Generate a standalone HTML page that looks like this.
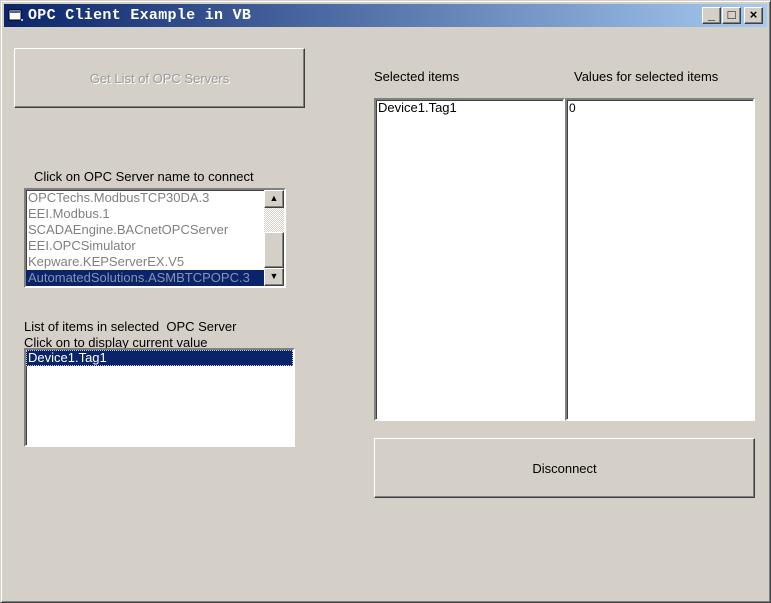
<!DOCTYPE html>
<html><head><style>
*{margin:0;padding:0;box-sizing:border-box}
body{width:771px;height:603px;background:#d4d0c8;position:relative;overflow:hidden;font-family:"Liberation Sans",Arial,sans-serif;font-size:12px;color:#000}
.win{position:absolute;left:0;top:0;width:771px;height:603px;border:1px solid;border-color:#d4d0c8 #404040 #404040 #d4d0c8;box-shadow:inset 1px 1px #fff,inset -1px -1px #808080}
.title{position:absolute;left:4px;top:4px;width:763px;height:23px;background:linear-gradient(to right,#0a246a,#a6caf0)}
.title span{position:absolute;left:24px;top:3px;color:#fff;font-family:"Liberation Mono",monospace;font-weight:bold;font-size:15px;letter-spacing:0.3px}
.tb{position:absolute;top:3px;width:19px;height:17px;background:#d4d0c8;border:1px solid;border-color:#fff #404040 #404040 #fff;box-shadow:inset -1px -1px #808080;font-weight:bold;font-size:13px;text-align:center;line-height:14px}
.abs{position:absolute}
.btn{position:absolute;background:#d4d0c8;border:1px solid;border-color:#fff #404040 #404040 #fff;box-shadow:inset -1px -1px #808080;display:flex;align-items:center;justify-content:center;font-size:13px}
.lb{position:absolute;background:#fff;border:2px solid;border-color:#808080 #fff #fff #808080;box-shadow:inset 1px 1px #404040}
.row{height:16px;line-height:16px;padding-left:2px;white-space:nowrap;font-size:13px}
.sb{position:absolute;background:#d4d0c8;border:1px solid;border-color:#fff #404040 #404040 #fff;box-shadow:inset -1px -1px #808080;color:#000}
</style></head><body>
<div class="win"></div>
<div class="title">
<svg class="abs" style="left:4px;top:5px" width="16" height="14"><rect x="1" y="1" width="12" height="10" fill="#fff" stroke="#000"/><rect x="2" y="2" width="10" height="2" fill="#4a6a9a"/><rect x="13" y="10" width="2" height="2" fill="#ccc"/></svg>
<span>OPC Client Example in VB</span>
<div class="tb" style="left:698px">_</div>
<div class="tb" style="left:718px">□</div>
<div class="tb" style="left:740px">×</div>
</div>
<div class="btn" style="left:14px;top:48px;width:291px;height:60px;color:#9a9a9a;text-shadow:1px 1px #fff">Get List of OPC Servers</div>
<div class="abs" style="left:34px;top:169px;font-size:13px">Click on OPC Server name to connect</div>
<div class="lb" style="left:24px;top:188px;width:262px;height:100px;color:#808080">
<div class="row">OPCTechs.ModbusTCP30DA.3</div>
<div class="row">EEI.Modbus.1</div>
<div class="row">SCADAEngine.BACnetOPCServer</div>
<div class="row">EEI.OPCSimulator</div>
<div class="row">Kepware.KEPServerEX.V5</div>
<div class="row" style="background:#0a246a;color:#8a92b0;width:238px">AutomatedSolutions.ASMBTCPOPC.3</div>
<div class="abs" style="left:238px;top:0;width:20px;height:96px;background:repeating-conic-gradient(#d4d0c8 0 25%,#fff 0 50%) 0 0/2px 2px"></div>
<div class="sb" style="left:238px;top:0;width:20px;height:18px;text-align:center;font-size:9px;line-height:15px">▲</div>
<div class="sb" style="left:238px;top:42px;width:20px;height:36px"></div>
<div class="sb" style="left:238px;top:78px;width:20px;height:18px;text-align:center;font-size:9px;line-height:15px">▼</div>
</div>
<div class="abs" style="left:24px;top:319px;font-size:13px;line-height:16px">List of items in selected&nbsp; OPC Server<br>Click on to display current value</div>
<div class="lb" style="left:24px;top:348px;width:271px;height:99px">
<div class="row" style="background:#0a246a;color:#fff;outline:1px dotted #ccc;outline-offset:-1px">Device1.Tag1</div>
</div>
<div class="abs" style="left:374px;top:69px;font-size:13px">Selected items</div>
<div class="abs" style="left:574px;top:69px;font-size:13px">Values for selected items</div>
<div class="lb" style="left:374px;top:98px;width:191px;height:323px"><div class="row" style="padding-left:2px">Device1.Tag1</div></div>
<div class="lb" style="left:565px;top:98px;width:190px;height:323px"><div class="row" style="font-size:12px">0</div></div>
<div class="btn" style="left:374px;top:438px;width:381px;height:60px">Disconnect</div>
</body></html>
